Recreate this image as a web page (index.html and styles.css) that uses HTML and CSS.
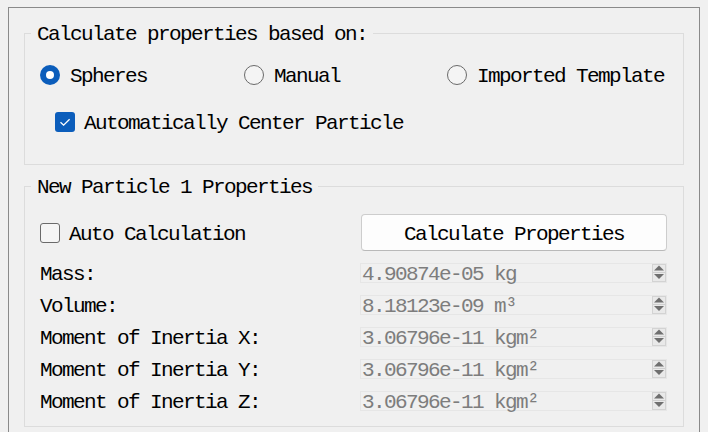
FILE: index.html
```html
<!DOCTYPE html>
<html lang="en">
<head>
<meta charset="utf-8">
<title>Particle Properties</title>
<link rel="stylesheet" href="styles.css">
</head>
<body>
<div class="frame">
  <fieldset class="group group-basis">
    <legend class="group-title">Calculate properties based on:</legend>
    <div class="radios">
      <label class="opt"><span class="radio radio-on"></span><span class="txt">Spheres</span></label>
      <label class="opt"><span class="radio"></span><span class="txt">Manual</span></label>
      <label class="opt"><span class="radio"></span><span class="txt">Imported Template</span></label>
    </div>
    <label class="check-row center-row">
      <span class="box box-on"><svg viewBox="0 0 20 20" width="20" height="20"><path d="M5.5 10.2 L8.6 13.2 L14.6 7.2" fill="none" stroke="#fff" stroke-width="1.3"/></svg></span>
      <span class="txt">Automatically Center Particle</span>
    </label>
  </fieldset>

  <fieldset class="group group-props">
    <legend class="group-title">New Particle 1 Properties</legend>
    <div class="props">
      <label class="check-row"><span class="box"></span><span class="txt">Auto Calculation</span></label>
      <button class="btn" type="button">Calculate Properties</button>

      <span class="lbl">Mass:</span>
      <div class="spin"><span class="val">4.90874e-05 kg</span><span class="arrows"><svg viewBox="0 0 14 18" width="14" height="18"><rect x="0.5" y="0.5" width="13" height="17" fill="#e9e9e9" stroke="#d3d3d3"/><polygon points="7,1.5 2,6.5 12,6.5" fill="#6f6f6f"/><line x1="1" y1="8.5" x2="13" y2="8.5" stroke="#cfcfcf"/><polygon points="2,10 12,10 7,15" fill="#6f6f6f"/></svg></span></div>

      <span class="lbl">Volume:</span>
      <div class="spin"><span class="val">8.18123e-09 m³</span><span class="arrows"><svg viewBox="0 0 14 18" width="14" height="18"><rect x="0.5" y="0.5" width="13" height="17" fill="#e9e9e9" stroke="#d3d3d3"/><polygon points="7,1.5 2,6.5 12,6.5" fill="#6f6f6f"/><line x1="1" y1="8.5" x2="13" y2="8.5" stroke="#cfcfcf"/><polygon points="2,10 12,10 7,15" fill="#6f6f6f"/></svg></span></div>

      <span class="lbl">Moment of Inertia X:</span>
      <div class="spin"><span class="val">3.06796e-11 kgm²</span><span class="arrows"><svg viewBox="0 0 14 18" width="14" height="18"><rect x="0.5" y="0.5" width="13" height="17" fill="#e9e9e9" stroke="#d3d3d3"/><polygon points="7,1.5 2,6.5 12,6.5" fill="#6f6f6f"/><line x1="1" y1="8.5" x2="13" y2="8.5" stroke="#cfcfcf"/><polygon points="2,10 12,10 7,15" fill="#6f6f6f"/></svg></span></div>

      <span class="lbl">Moment of Inertia Y:</span>
      <div class="spin"><span class="val">3.06796e-11 kgm²</span><span class="arrows"><svg viewBox="0 0 14 18" width="14" height="18"><rect x="0.5" y="0.5" width="13" height="17" fill="#e9e9e9" stroke="#d3d3d3"/><polygon points="7,1.5 2,6.5 12,6.5" fill="#6f6f6f"/><line x1="1" y1="8.5" x2="13" y2="8.5" stroke="#cfcfcf"/><polygon points="2,10 12,10 7,15" fill="#6f6f6f"/></svg></span></div>

      <span class="lbl">Moment of Inertia Z:</span>
      <div class="spin"><span class="val">3.06796e-11 kgm²</span><span class="arrows"><svg viewBox="0 0 14 18" width="14" height="18"><rect x="0.5" y="0.5" width="13" height="17" fill="#e9e9e9" stroke="#d3d3d3"/><polygon points="7,1.5 2,6.5 12,6.5" fill="#6f6f6f"/><line x1="1" y1="8.5" x2="13" y2="8.5" stroke="#cfcfcf"/><polygon points="2,10 12,10 7,15" fill="#6f6f6f"/></svg></span></div>
    </div>
  </fieldset>
</div>
</body>
</html>
```

FILE: styles.css
```css
html, body {
  margin: 0;
  padding: 0;
}

body {
  background: #f0f0f0;
  color: #000;
  font-family: "Liberation Mono", "DejaVu Sans Mono", monospace;
  font-size: 21px;
  letter-spacing: -1.6px;
  line-height: 22px;
  overflow: hidden;
  height: 432px;
}

.frame {
  box-sizing: border-box;
  margin: 7px 0 0 8px;
  width: 692px;
  height: 450px;
  border: 1px solid #8a8a8a;
  padding: 12px 15px 0 15px;
}

.group {
  margin: 0;
  padding: 0;
  border: 1px solid #dcdcdc;
  min-width: 0;
}

.group-title {
  margin-left: -9px;
  padding: 4px 6px 0 6px;
  line-height: 22px;
}

.group-basis {
  padding: 16px 0 31px 15px;
}

.radios {
  display: grid;
  grid-template-columns: 204px 203px auto;
  height: 22px;
}

.opt {
  display: flex;
  align-items: center;
  gap: 10px;
  white-space: nowrap;
}

.txt {
  padding-top: 4px;
  line-height: 22px;
}

.radio {
  box-sizing: border-box;
  width: 20px;
  height: 20px;
  border-radius: 50%;
  border: 1px solid #6a6a6a;
  background: #f4f4f4;
  flex: none;
}

.radio-on {
  border: none;
  background: #0b5dbb;
  display: flex;
  align-items: center;
  justify-content: center;
}

.radio-on::after {
  content: "";
  width: 8px;
  height: 8px;
  border-radius: 50%;
  background: #fff;
}

.check-row {
  display: flex;
  align-items: center;
  gap: 9px;
  white-space: nowrap;
}

.center-row {
  margin-top: 27px;
  margin-left: 15px;
  height: 22px;
}

.box {
  box-sizing: border-box;
  width: 20px;
  height: 20px;
  border-radius: 3px;
  border: 1px solid #6a6a6a;
  background: #f5f5f5;
  flex: none;
  display: flex;
}

.box-on {
  border: none;
  background: #0b5dbb;
}

.group-props {
  margin-top: 8px;
  padding: 15px 16px 15px 15px;
}

.props {
  display: grid;
  grid-template-columns: 320px 307px;
  grid-template-rows: 37px;
  grid-auto-rows: 20px;
  row-gap: 12px;
  align-items: center;
}

.btn {
  box-sizing: border-box;
  margin: 0 0 1px 1px;
  height: 37px;
  width: 306px;
  background: #fdfdfd;
  border: 1px solid #cdcdcd;
  border-bottom-color: #b9b9b9;
  border-radius: 4px;
  font: inherit;
  letter-spacing: inherit;
  color: #000;
  padding: 4px 0 0 0;
  align-self: start;
}

.lbl {
  white-space: nowrap;
  line-height: 20px;
  padding-top: 4px;
}

.spin {
  box-sizing: border-box;
  height: 20px;
  border: 1px solid #e6e6e6;
  background: #f0f0f0;
  display: flex;
  align-items: center;
  justify-content: space-between;
  padding-left: 1px;
}

.val {
  color: #7d7d7d;
  line-height: 18px;
  padding-top: 4px;
  white-space: nowrap;
}

.arrows {
  display: flex;
  width: 14px;
  height: 18px;
}
```
